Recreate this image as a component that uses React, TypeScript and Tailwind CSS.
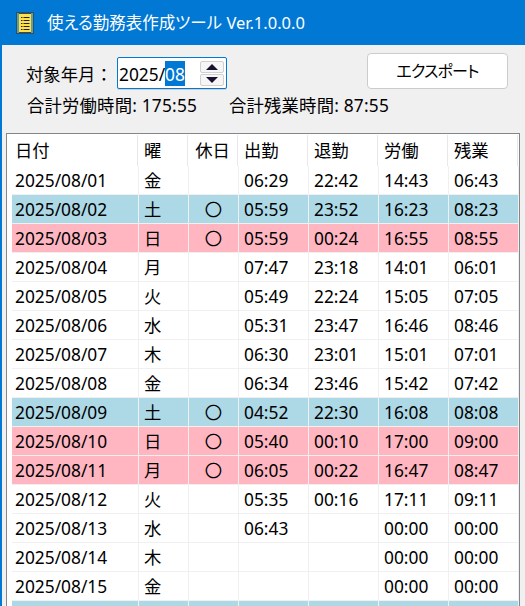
const rows = [
  ["2025/08/01", "金", "", "06:29", "22:42", "14:43", "06:43"],
  ["2025/08/02", "土", "〇", "05:59", "23:52", "16:23", "08:23"],
  ["2025/08/03", "日", "〇", "05:59", "00:24", "16:55", "08:55"],
  ["2025/08/04", "月", "", "07:47", "23:18", "14:01", "06:01"],
  ["2025/08/05", "火", "", "05:49", "22:24", "15:05", "07:05"],
  ["2025/08/06", "水", "", "05:31", "23:47", "16:46", "08:46"],
  ["2025/08/07", "木", "", "06:30", "23:01", "15:01", "07:01"],
  ["2025/08/08", "金", "", "06:34", "23:46", "15:42", "07:42"],
  ["2025/08/09", "土", "〇", "04:52", "22:30", "16:08", "08:08"],
  ["2025/08/10", "日", "〇", "05:40", "00:10", "17:00", "09:00"],
  ["2025/08/11", "月", "〇", "06:05", "00:22", "16:47", "08:47"],
  ["2025/08/12", "火", "", "05:35", "00:16", "17:11", "09:11"],
  ["2025/08/13", "水", "", "06:43", "", "00:00", "00:00"],
  ["2025/08/14", "木", "", "", "", "00:00", "00:00"],
  ["2025/08/15", "金", "", "", "", "00:00", "00:00"],
];

const headers = ["日付", "曜", "休日", "出勤", "退勤", "労働", "残業"];

function rowColor(day: string, holiday: string) {
  if (!holiday) return "bg-white";
  return day === "土" ? "bg-[#add8e6]" : "bg-[#ffb6c1]";
}

function NotebookIcon() {
  return (
    <svg width="18" height="22" viewBox="0 0 18 22" className="shrink-0">
      <rect x="0" y="0" width="18" height="22" fill="#2f4f5f" />
      <rect x="1" y="1" width="2" height="20" fill="#5aa0a8" />
      <rect x="15" y="1" width="2" height="20" fill="#5aa0a8" />
      <rect x="3" y="2" width="12" height="18" fill="#ffdf4a" />
      {[5, 8, 11, 14, 17].map((y) => (
        <g key={y}>
          <rect x="5" y={y} width="1.5" height="1" fill="#222" />
          <rect x="7.5" y={y} width="6" height="1" fill="#222" />
        </g>
      ))}
    </svg>
  );
}

export default function App() {
  return (
    <div className="w-[525px] h-[606px] overflow-hidden flex flex-col bg-[#f0f0f0] text-[17.33px] leading-none text-black font-['Noto_Sans','Noto_Sans_CJK_JP',sans-serif]">
      {/* Title bar */}
      <div className="h-[45px] shrink-0 bg-[#0078d4] flex items-center pl-[16px] pr-2 text-white">
        <NotebookIcon />
        <span className="ml-[13px] pt-[2px] text-[16.5px] [font-feature-settings:'palt']">使える勤務表作成ツール Ver.1.0.0.0</span>
      </div>

      <div className="flex-1 min-h-0 flex flex-col border-l-2 border-[#0078d4]">
        {/* Controls */}
        <div className="h-[88px] shrink-0 pl-[24px] pr-[25px] pt-[8px]">
          <div className="flex items-start justify-between">
            <div className="flex items-center mt-[4px]">
              <span className="w-[91px] pt-[4px]">対象年月：</span>
              <div className="w-[110px] h-[32px] bg-white border border-[#0078d4] rounded-[2px] flex items-center pl-[1px] shadow-[0_1px_0_#d0d0d0]">
                <span className="pt-[3px]">2025/</span>
                <span className="bg-[#0078d4] text-white h-[25px] pt-[3px] flex items-center">08</span>
                <div className="ml-auto mr-[2px] flex flex-col gap-[1px]">
                  <div className="w-[24px] h-[12px] bg-[#f6f6f6] border border-[#d0d0d0] rounded-[2px] flex items-center justify-center">
                    <div className="w-0 h-0 border-x-[6px] border-x-transparent border-b-[6px] border-b-[#1c1030]" />
                  </div>
                  <div className="w-[24px] h-[12px] bg-[#f6f6f6] border border-[#d0d0d0] rounded-[2px] flex items-center justify-center">
                    <div className="w-0 h-0 border-x-[6px] border-x-transparent border-t-[6px] border-t-[#1c1030]" />
                  </div>
                </div>
              </div>
            </div>
            <button className="w-[141px] h-[36px] bg-white border border-[#cccccc] rounded-[4px] mr-[-8px] text-[16px] tracking-[-0.8px] [font-feature-settings:'palt']">
              エクスポート
            </button>
          </div>
          <div className="flex mt-[8px] pl-[1px] tracking-[0.2px]">
            <span className="w-[202px]">合計労働時間: 175:55</span>
            <span>合計残業時間: 87:55</span>
          </div>
        </div>

        {/* Table */}
        <div className="flex-1 min-h-0 overflow-hidden ml-[4px] mr-[5px] border border-[#82878c] border-b-0 bg-white">
          <div className="grid grid-cols-[131px_50px_50px_70px_70px_70px_70px] h-[32px]">
            {headers.map((h, i) => (
              <div
                key={h}
                className={`flex items-center border-r border-[#e8e8e8] mt-[1px] ${i === 0 ? "pl-[8px]" : i === 2 ? "justify-center" : "pl-[6px]"}`}
              >
                {h}
              </div>
            ))}
          </div>
          {rows.map((r) => (
            <div key={r[0]} className="flex h-[29px] pl-[5px]">
              <div className={`grid grid-cols-[127px_50px_50px_70px_70px_70px_70px] w-full border-b border-[#f0f0f0] ${rowColor(r[1], r[2])}`}>
                {r.map((c, i) => (
                  <div
                    key={i}
                    className={`flex items-center pt-[2px] border-r border-[#f0f0f0] ${i === 0 ? "pl-[3px]" : i === 1 ? "pl-[5px]" : i === 2 ? "justify-center" : "pl-[5px]"}`}
                  >
                    {c}
                  </div>
                ))}
              </div>
            </div>
          ))}
          {/* next row, only its top edge is visible */}
          <div className="flex h-[29px] pl-[5px]">
            <div className="grid grid-cols-[127px_50px_50px_70px_70px_70px_70px] w-full bg-[#add8e6]">
              {headers.map((h) => (
                <div key={h} className="border-r border-[#f0f0f0]" />
              ))}
            </div>
          </div>
        </div>
      </div>
    </div>
  );
}
